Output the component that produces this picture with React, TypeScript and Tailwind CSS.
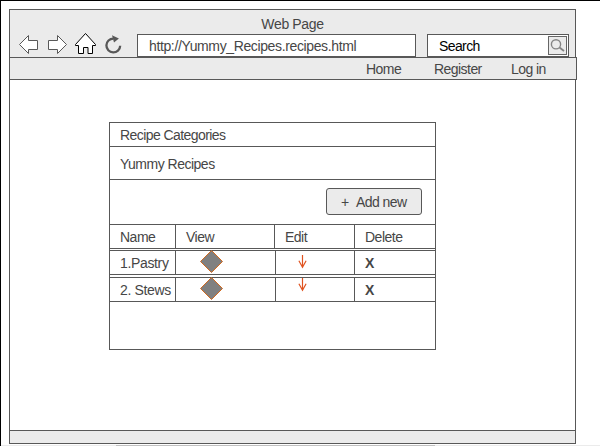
import React from 'react';

const recipes = [
  { name: '1.Pastry', gap: 'mt-px', arrowTop: 'pt-[4px]' },
  { name: '2. Stews', gap: 'mt-[2px]', arrowTop: 'pt-0' },
];

function BackIcon() {
  return (
    <svg className="w-5 h-[23px] overflow-visible" viewBox="0 0 20 23">
      <path d="M.5 10.5 9.5 1.5V6.5H18.5V15.5H9.5V19.5Z" fill="#fff" stroke="#585858" />
    </svg>
  );
}

function ForwardIcon() {
  return (
    <svg className="w-5 h-[23px] ml-[9px] overflow-visible" viewBox="0 0 20 23">
      <path d="M18.5 10.5 9.5 1.5V6.5H.5V15.5H9.5V19.5Z" fill="#fff" stroke="#585858" />
    </svg>
  );
}

function HomeIcon() {
  return (
    <svg className="w-[21px] h-[23px] ml-[7px] overflow-visible" viewBox="0 0 21 23">
      <path
        d="M10.5 -.5 20.5 10.5V11.5H17.5V19.5H13V13.5H8.5V19.5H3.5V11.5H.5V10.5Z"
        fill="#fff"
        stroke="#000"
      />
    </svg>
  );
}

function ReloadIcon() {
  return (
    <svg className="w-[17px] h-[23px] ml-[9px] overflow-visible" viewBox="0 0 17 23">
      <path d="M15.2 11.8A6.9 6.9 0 1 1 8.4 4.6" fill="none" stroke="#585858" strokeWidth="2.3" />
      <path d="M7 1.2 13.9 4.5 9 8.6Z" fill="#585858" />
    </svg>
  );
}

function SearchIcon() {
  return (
    <span className="w-[19px] h-[19px] border border-[#666] bg-[#ebebeb]">
      <svg className="block w-[17px] h-[17px]" viewBox="0 0 17 17" fill="none" stroke="#858585">
        <circle cx="7" cy="7.3" r="4.6" strokeWidth="1.4" />
        <path d="M10.5 10.5 15 14" strokeWidth="1.8" />
      </svg>
    </span>
  );
}

export default function App() {
  return (
    <div className="w-[600px] h-[446px] overflow-hidden bg-white border-l border-t border-black pt-2 flex flex-col font-['Liberation_Sans',Arial,sans-serif] text-[14px] leading-4 text-[#464646]">
      <div className="ml-2 w-[567px] h-[435px] shrink-0 border border-[#585858] flex flex-col">
        <header className="bg-[#ebebeb] h-[47px] shrink-0">
          <div className="h-6 pt-[6px] text-center tracking-[-0.35px]">Web Page</div>
          <div className="flex h-[23px] pl-[9px]">
            <BackIcon />
            <ForwardIcon />
            <HomeIcon />
            <ReloadIcon />
            <div className="ml-[15px] w-[279px] border border-[#585858] bg-white pl-[11px] pt-[3px] tracking-[-0.37px]">
              http://Yummy_Recipes.recipes.html
            </div>
            <div className="ml-[11px] w-[142px] border border-[#585858] bg-white pl-[11px] pr-px pt-px flex justify-between text-black">
              <span className="pt-[2px] tracking-[-0.6px]">Search</span>
              <SearchIcon />
            </div>
          </div>
        </header>
        <nav className="-ml-px w-[568px] h-[23px] shrink-0 border border-[#585858] bg-[#ebebeb] pt-[3px] flex tracking-[-0.55px]">
          <span className="ml-[356px] w-[68px]">Home</span>
          <span className="w-[77px]">Register</span>
          <span>Log in</span>
        </nav>
        <main className="h-[350px] shrink-0 pt-[42px] pl-[99px]">
          <section className="w-[327px] h-[228px] border border-[#585858]">
            <div className="h-6 border-b border-[#585858] pl-[10px] pt-[4px] tracking-[-0.57px]">Recipe Categories</div>
            <div className="h-[33px] border-b border-[#585858] pl-[10px] pt-[9px] tracking-[-0.5px]">Yummy Recipes</div>
            <div className="h-[45px] border-b border-[#585858] pt-2 pr-[13px] flex justify-end">
              <button className="w-[96px] h-[27px] border border-[#585858] rounded-[3px] bg-[#ebebeb] flex pl-[14px] pt-[5px]">
                <span className="w-[15px] text-left">+</span>
                <span className="tracking-[-0.55px]">Add new</span>
              </button>
            </div>
            <div className="h-6 border-b border-[#585858] flex tracking-[-0.5px]">
              <div className="w-[66px] border-r border-[#585858] pl-[10px] pt-[4px]">Name</div>
              <div className="w-[99px] border-r border-[#585858] pl-[10px] pt-[4px]">View</div>
              <div className="w-[80px] border-r border-[#585858] pl-[10px] pt-[4px]">Edit</div>
              <div className="pl-[10px] pt-[4px]">Delete</div>
            </div>
            {recipes.map((r) => (
              <div key={r.name} className={`h-[25px] border-y border-[#585858] flex ${r.gap}`}>
                <div className="w-[66px] border-r border-[#585858] pl-[10px] pt-[4px] whitespace-nowrap tracking-[-0.35px]">{r.name}</div>
                <div className="w-[100px] border-r border-[#585858] pl-6">
                  <svg className="block w-[23px] h-[23px] overflow-visible" viewBox="0 0 23 23">
                    <path d="M11.5 -.5 22.5 10.5 11.5 21.5 .5 10.5Z" fill="#808080" stroke="#d2691e" />
                  </svg>
                </div>
                <div className={`w-[79px] border-r border-[#585858] pl-[22px] ${r.arrowTop}`}>
                  <svg className="block w-[9px] h-[14px]" viewBox="0 0 9 14" fill="none" stroke="#e0521f">
                    <path d="M4.5 0V12.3M.9 5.8 4.5 12.3 8.1 5.8" strokeWidth="1.2" />
                  </svg>
                </div>
                <div className="pl-[10px] pt-[4px] font-bold">X</div>
              </div>
            ))}
          </section>
        </main>
        <footer className="h-[13px] shrink-0 border-t border-[#585858] bg-[#ebebeb]" />
      </div>
      <div className="mt-px h-px shrink-0 bg-[#ebebeb] pl-[115px]">
        <div className="w-[319px] h-px bg-[#c0c0c0]" />
      </div>
    </div>
  );
}
